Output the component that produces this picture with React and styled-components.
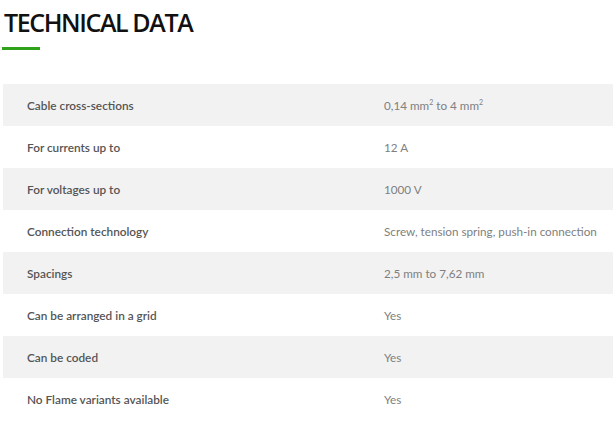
import React from "react";
import styled, { createGlobalStyle } from "styled-components";

const Global = createGlobalStyle`
  html, body { margin: 0; padding: 0; background: #fff; }
  body { width: 615px; height: 424px; overflow: hidden; }
`;

const Page = styled.div`
  padding: 0 2px 0 3px;
`;

const Title = styled.h2`
  margin: 0;
  padding: 5px 0 0 1px;
  font-family: "Open Sans", sans-serif;
  font-weight: 600;
  font-size: 25px;
  line-height: 34px;
  letter-spacing: -1.4px;
  color: #111;
`;

const Underline = styled.div`
  width: 38px;
  height: 3px;
  background: #2ea31a;
  margin: 8px 0 0 -1px;
`;

const Table = styled.div`
  margin-top: 34px;
  display: flex;
  flex-direction: column;
`;

const Row = styled.div`
  display: grid;
  grid-template-columns: 381px 1fr;
  height: 42px;
  align-items: center;
  background: ${(p) => (p.$shaded ? "#f2f2f2" : "#fff")};
`;

const Label = styled.div`
  padding-left: 24px;
  font-family: Lato, sans-serif;
  font-weight: 600;
  font-size: 11.8px;
  color: #555;
`;

const Value = styled.div`
  font-family: Lato, sans-serif;
  font-size: 11.7px;
  color: #808080;
  sup { font-size: 7px; vertical-align: top; line-height: 1; position: relative; top: 1px; }
`;

const rows = [
  ["Cable cross-sections", <>0,14 mm<sup>2</sup> to 4 mm<sup>2</sup></>],
  ["For currents up to", "12 A"],
  ["For voltages up to", "1000 V"],
  ["Connection technology", "Screw, tension spring, push-in connection"],
  ["Spacings", "2,5 mm to 7,62 mm"],
  ["Can be arranged in a grid", "Yes"],
  ["Can be coded", "Yes"],
  ["No Flame variants available", "Yes"],
];

export default function App() {
  return (
    <Page>
      <Global />
      <Title>TECHNICAL DATA</Title>
      <Underline />
      <Table>
        {rows.map(([l, v], i) => (
          <Row key={i} $shaded={i % 2 === 0}>
            <Label>{l}</Label>
            <Value>{v}</Value>
          </Row>
        ))}
      </Table>
    </Page>
  );
}
